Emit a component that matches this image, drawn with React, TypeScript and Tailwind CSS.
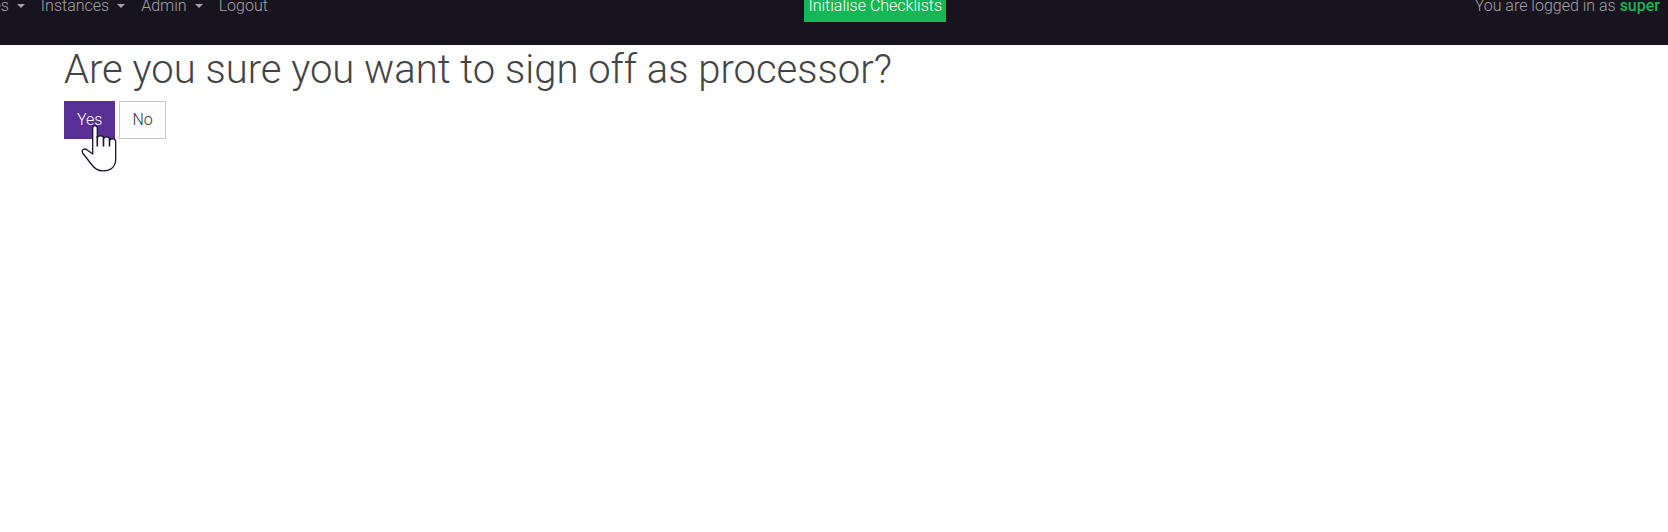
const navItems = [
  { label: "Templates", menu: true },
  { label: "Instances", menu: true },
  { label: "Admin", menu: true },
  { label: "Logout", menu: false },
];

function HandPointer() {
  return (
    <svg className="pointer-events-none absolute left-[17px] top-[23px] h-[48px] w-[36px]" viewBox="0 0 36 48" aria-hidden="true">
      <path
        d="M11.7 30V4C11.700 .7 16.300 .7 16.300 4V13.500C17.500 11.300 22.500 11.300 22.700 14.500C24 12 28.700 12.300 28.700 16C30.500 14 34.700 14.300 34.700 18V35C34.700 42.500 30 46.800 22 46.800C17 46.800 13.500 44.500 11 41L2 29.500C-.2 26 3.500 23.500 6.500 26.300Z"
        fill="white"
        stroke="#18142a"
        strokeWidth="1.300"
        strokeLinejoin="round"
      />
      <path d="M16.300 12v10.500M22.500 13.500v9M28.500 15v7.500" stroke="#18142a" strokeWidth="1.600" />
    </svg>
  );
}

export default function App() {
  return (
    <div className="min-h-screen bg-white font-[Roboto,sans-serif] text-base font-light text-[#444]">
      <header className="flex h-[45px] items-start justify-between overflow-hidden bg-[#18141f] text-[#a3a1a5]">
        <nav className="-ml-[65px] -mt-[6px] flex gap-4 pr-2">
          {navItems.map((item) => (
            <a key={item.label} href="#" className="flex items-center">
              {item.label}
              {item.menu && <span className="ml-2 border-x-4 border-t-4 border-x-transparent border-t-current" />}
            </a>
          ))}
        </nav>
        <button className="-mt-[10px] h-8 bg-[#14b755] px-1 text-white">Initialise Checklists</button>
        <p className="-mt-[6px] pr-2 text-right">
          You are logged in as <a href="#" className="font-medium text-[#14b755]">super</a>
        </p>
      </header>
      <main className="px-16">
        <h1 className="mb-[6px] text-[40px] leading-[50px]">Are you sure you want to sign off as processor?</h1>
        <div className="flex gap-1">
          <div className="relative">
            <button className="h-[38px] border border-[#593196] bg-[#593196] px-3 text-white">Yes</button>
            <HandPointer />
          </div>
          <button className="h-[38px] border border-[#c8c8c8] bg-[#fdfdfe] px-3 text-[#333]">No</button>
        </div>
      </main>
    </div>
  );
}
